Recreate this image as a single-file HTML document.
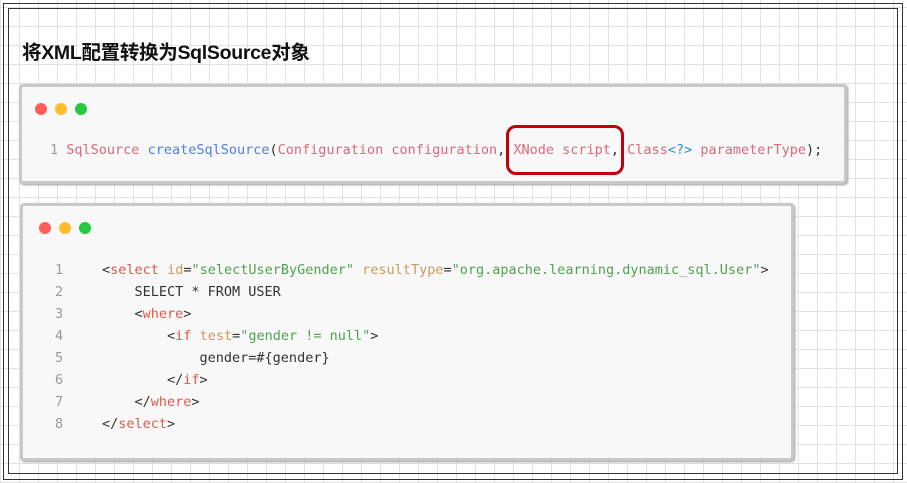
<!DOCTYPE html>
<html><head><meta charset="utf-8"><style>
html,body{margin:0;padding:0}
body{width:907px;height:483px;position:relative;overflow:hidden;background-color:#fff;
background-image:linear-gradient(#e3e3e3 1px,transparent 1px),linear-gradient(90deg,#e3e3e3 1px,transparent 1px);
background-size:19px 19px;background-position:0 7px;font-family:"DejaVu Sans Mono","Liberation Mono",monospace}
.b1{position:absolute;left:3px;top:3px;width:898px;height:475px;border:1px solid #333}
.b2{position:absolute;left:8px;top:8px;width:888px;height:464px;border:1px solid #333}
h1{position:absolute;left:22px;top:36px;margin:0;font:bold 19.5px "Liberation Sans","Noto Sans CJK SC",sans-serif;color:#111;letter-spacing:-0.3px}
.card{position:absolute;background:#f8f8f8;border:3px solid #c8c8c8;border-radius:4px;box-shadow:1px 1px 2px #999}
.dot{position:absolute;width:12px;height:12px;border-radius:50%;top:17px}
.code{position:absolute;font-size:13.5px;line-height:22px;white-space:pre;color:#333}
.n{color:#999}.r{color:#e45649}.k{color:#d96a7a}.f{color:#4f7de8}.a{color:#c99b61}.s{color:#50a14f}.b{color:#2a8fd9}
.box{position:absolute;left:506px;top:125px;width:112px;height:44px;border:3px solid #c0000a;border-radius:10px}
</style></head><body>
<div class="b1"></div><div class="b2"></div>
<h1>将XML配置转换为SqlSource对象</h1>
<div class="card" style="left:19px;top:84px;width:822px;height:94px">
<div class="dot" style="left:13px;top:16px;background:#ff5f56"></div>
<div class="dot" style="left:33px;top:16px;background:#ffbd2e"></div>
<div class="dot" style="left:53px;top:16px;background:#27c93f"></div>
<div class="code" style="left:28px;top:52px"><span class="n">1</span> <span class="k">SqlSource</span> <span class="f">createSqlSource</span>(<span class="k">Configuration configuration</span>, <span class="k">XNode script</span>, <span class="k">Class</span><span class="b">&lt;?&gt;</span> <span class="k">parameterType</span>);</div>
</div>
<div class="box"></div>
<div class="card" style="left:20px;top:203px;width:768px;height:252px">
<div class="dot" style="left:16px;top:16px;background:#ff5f56"></div>
<div class="dot" style="left:36px;top:16px;background:#ffbd2e"></div>
<div class="dot" style="left:56px;top:16px;background:#27c93f"></div>
<div class="code" style="left:32px;top:53px"><span class="n">1</span>
<span class="n">2</span>
<span class="n">3</span>
<span class="n">4</span>
<span class="n">5</span>
<span class="n">6</span>
<span class="n">7</span>
<span class="n">8</span></div>
<div class="code" style="left:79px;top:53px">&lt;<span class="r">select</span> <span class="a">id</span>=<span class="s">"selectUserByGender"</span> <span class="a">resultType</span>=<span class="s">"org.apache.learning.dynamic_sql.User"</span>&gt;
    SELECT * FROM USER
    &lt;<span class="r">where</span>&gt;
        &lt;<span class="r">if</span> <span class="a">test</span>=<span class="s">"gender != null"</span>&gt;
            gender=#{gender}
        &lt;/<span class="r">if</span>&gt;
    &lt;/<span class="r">where</span>&gt;
&lt;/<span class="r">select</span>&gt;</div>
</div>
</body></html>
